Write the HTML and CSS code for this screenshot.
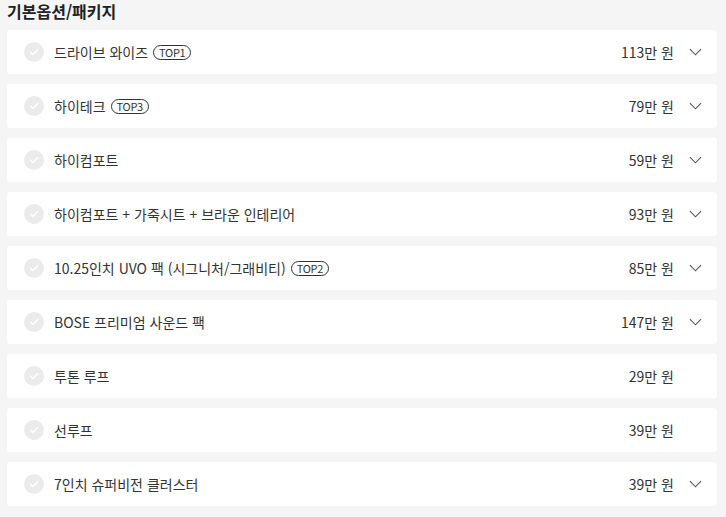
FILE: index.html
```html
<!DOCTYPE html>
<html lang="ko">
<head>
<meta charset="utf-8">
<link rel="stylesheet" href="styles.css">
</head>
<body>
<div class="page">
  <h2 class="title">기본옵션/패키지</h2>
  <ul class="list">
    <li class="item">
      <span class="check"><svg viewBox="0 0 20 20" width="20" height="20"><path d="M6.5 10.2l2.4 2.4 4.6-4.8" fill="none" stroke="#fff" stroke-width="1.4" stroke-linecap="round" stroke-linejoin="round"/></svg></span>
      <span class="name">드라이브 와이즈<span class="badge">TOP1</span></span>
      <span class="price">113만 원</span>
      <span class="chev"><svg viewBox="0 0 14 8" width="13" height="8"><path d="M1 1l6 6 6-6" fill="none" stroke="#555" stroke-width="1.2"/></svg></span>
    </li>
    <li class="item">
      <span class="check"><svg viewBox="0 0 20 20" width="20" height="20"><path d="M6.5 10.2l2.4 2.4 4.6-4.8" fill="none" stroke="#fff" stroke-width="1.4" stroke-linecap="round" stroke-linejoin="round"/></svg></span>
      <span class="name">하이테크<span class="badge">TOP3</span></span>
      <span class="price">79만 원</span>
      <span class="chev"><svg viewBox="0 0 14 8" width="13" height="8"><path d="M1 1l6 6 6-6" fill="none" stroke="#555" stroke-width="1.2"/></svg></span>
    </li>
    <li class="item">
      <span class="check"><svg viewBox="0 0 20 20" width="20" height="20"><path d="M6.5 10.2l2.4 2.4 4.6-4.8" fill="none" stroke="#fff" stroke-width="1.4" stroke-linecap="round" stroke-linejoin="round"/></svg></span>
      <span class="name">하이컴포트</span>
      <span class="price">59만 원</span>
      <span class="chev"><svg viewBox="0 0 14 8" width="13" height="8"><path d="M1 1l6 6 6-6" fill="none" stroke="#555" stroke-width="1.2"/></svg></span>
    </li>
    <li class="item">
      <span class="check"><svg viewBox="0 0 20 20" width="20" height="20"><path d="M6.5 10.2l2.4 2.4 4.6-4.8" fill="none" stroke="#fff" stroke-width="1.4" stroke-linecap="round" stroke-linejoin="round"/></svg></span>
      <span class="name">하이컴포트 + 가죽시트 + 브라운 인테리어</span>
      <span class="price">93만 원</span>
      <span class="chev"><svg viewBox="0 0 14 8" width="13" height="8"><path d="M1 1l6 6 6-6" fill="none" stroke="#555" stroke-width="1.2"/></svg></span>
    </li>
    <li class="item">
      <span class="check"><svg viewBox="0 0 20 20" width="20" height="20"><path d="M6.5 10.2l2.4 2.4 4.6-4.8" fill="none" stroke="#fff" stroke-width="1.4" stroke-linecap="round" stroke-linejoin="round"/></svg></span>
      <span class="name">10.25인치 UVO 팩 (시그니처/그래비티)<span class="badge">TOP2</span></span>
      <span class="price">85만 원</span>
      <span class="chev"><svg viewBox="0 0 14 8" width="13" height="8"><path d="M1 1l6 6 6-6" fill="none" stroke="#555" stroke-width="1.2"/></svg></span>
    </li>
    <li class="item">
      <span class="check"><svg viewBox="0 0 20 20" width="20" height="20"><path d="M6.5 10.2l2.4 2.4 4.6-4.8" fill="none" stroke="#fff" stroke-width="1.4" stroke-linecap="round" stroke-linejoin="round"/></svg></span>
      <span class="name">BOSE 프리미엄 사운드 팩</span>
      <span class="price">147만 원</span>
      <span class="chev"><svg viewBox="0 0 14 8" width="13" height="8"><path d="M1 1l6 6 6-6" fill="none" stroke="#555" stroke-width="1.2"/></svg></span>
    </li>
    <li class="item">
      <span class="check"><svg viewBox="0 0 20 20" width="20" height="20"><path d="M6.5 10.2l2.4 2.4 4.6-4.8" fill="none" stroke="#fff" stroke-width="1.4" stroke-linecap="round" stroke-linejoin="round"/></svg></span>
      <span class="name">투톤 루프</span>
      <span class="price">29만 원</span>
      <span class="chev"></span>
    </li>
    <li class="item">
      <span class="check"><svg viewBox="0 0 20 20" width="20" height="20"><path d="M6.5 10.2l2.4 2.4 4.6-4.8" fill="none" stroke="#fff" stroke-width="1.4" stroke-linecap="round" stroke-linejoin="round"/></svg></span>
      <span class="name">선루프</span>
      <span class="price">39만 원</span>
      <span class="chev"></span>
    </li>
    <li class="item">
      <span class="check"><svg viewBox="0 0 20 20" width="20" height="20"><path d="M6.5 10.2l2.4 2.4 4.6-4.8" fill="none" stroke="#fff" stroke-width="1.4" stroke-linecap="round" stroke-linejoin="round"/></svg></span>
      <span class="name">7인치 슈퍼비전 클러스터</span>
      <span class="price">39만 원</span>
      <span class="chev"><svg viewBox="0 0 14 8" width="13" height="8"><path d="M1 1l6 6 6-6" fill="none" stroke="#555" stroke-width="1.2"/></svg></span>
    </li>
  </ul>
</div>
</body>
</html>
```

FILE: styles.css
```css
html, body {
  margin: 0;
  padding: 0;
  background: #f5f5f5;
}
body {
  font-family: "Noto Sans CJK KR", "Noto Sans", sans-serif;
  color: #333;
}
.page {
  padding: 0 9px 0 7px;
}
.title {
  margin: 0;
  height: 30px;
  line-height: 22px;
  font-size: 16px;
  font-weight: 700;
  color: #222;
}
.list {
  list-style: none;
  margin: 0;
  padding: 0;
  display: flex;
  flex-direction: column;
  gap: 10px;
}
.item {
  height: 44px;
  background: #fff;
  border-radius: 3px;
  display: flex;
  align-items: center;
  padding: 0 15px 0 17px;
  font-size: 14px;
}
.check {
  width: 20px;
  height: 20px;
  border-radius: 50%;
  background: #ebebeb;
  display: flex;
  margin-right: 10px;
}
.name {
  flex: 1;
  display: flex;
  align-items: center;
  color: #333;
}
.badge {
  margin-left: 5px;
  border: 1px solid #333;
  border-radius: 8px;
  font-size: 11px;
  line-height: 13px;
  padding: 0 5px;
  color: #333;
  letter-spacing: -0.3px;
}
.price {
  color: #333;
}
.chev {
  width: 13px;
  margin-left: 15px;
  display: flex;
  align-items: center;
}
```
